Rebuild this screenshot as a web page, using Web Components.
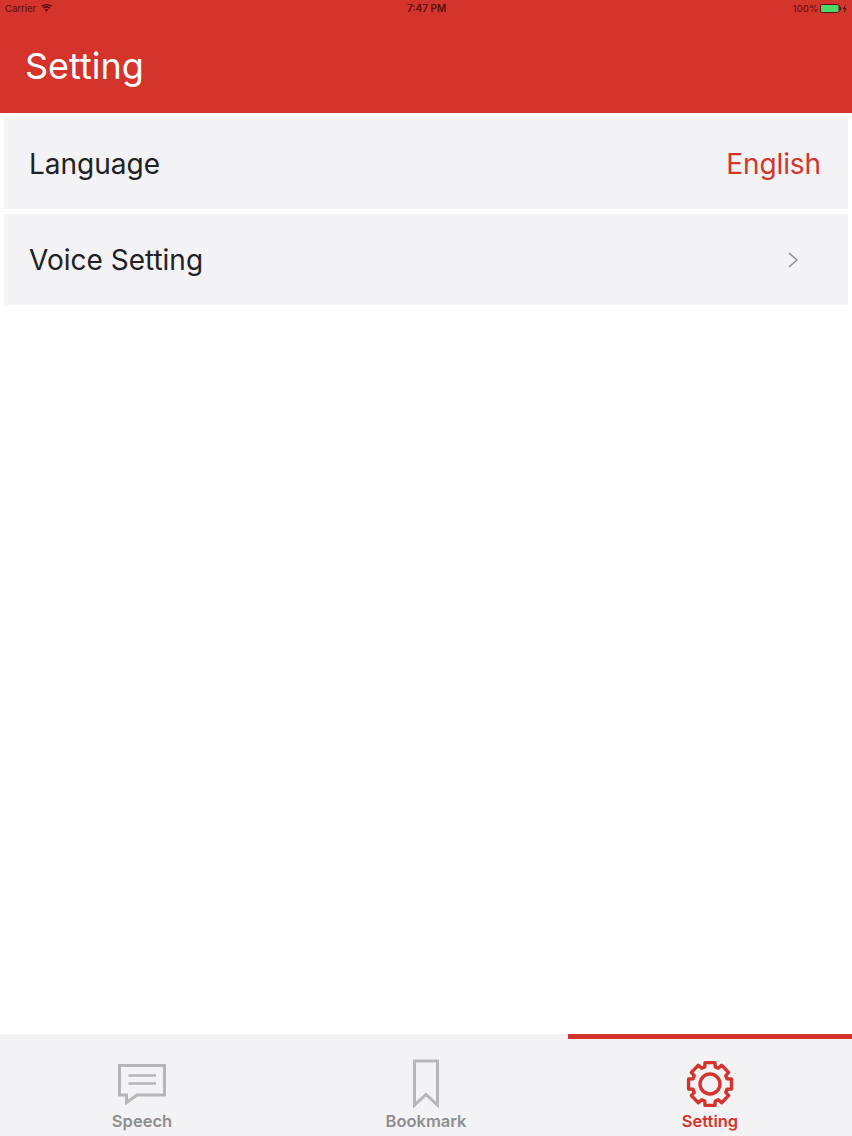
<!DOCTYPE html>
<html>
<head>
<meta charset="utf-8">
<title>Setting</title>
<style>
  html, body { margin: 0; height: 100%; background: #fff; }
  body { font-family: Inter, "Liberation Sans", sans-serif; }
</style>
</head>
<body>
<app-shell>
  <app-header slot="top" title="Setting"></app-header>
  <setting-row label="Language" value="English"></setting-row>
  <setting-row label="Voice Setting" chevron></setting-row>
  <tab-bar slot="bottom">
    <tab-item label="Speech" icon="speech"></tab-item>
    <tab-item label="Bookmark" icon="bookmark"></tab-item>
    <tab-item label="Setting" icon="gear" active></tab-item>
  </tab-bar>
</app-shell>

<script>
// Gear outline with 8 teeth, centred in a 48x48 box
function gearPath() {
  const teeth = 8, outer = 22, valley = 17.8, cx = 24, cy = 24;
  const halfTop = 0.23, halfBase = 0.3;
  const pts = [];
  for (let i = 0; i < teeth; i++) {
    const a = i * Math.PI * 2 / teeth - Math.PI / 2;
    pts.push([a - halfBase, valley], [a - halfTop, outer], [a + halfTop, outer], [a + halfBase, valley]);
  }
  const d = pts.map(([a, r], i) => {
    const x = (cx + r * Math.cos(a)).toFixed(2);
    const y = (cy + r * Math.sin(a)).toFixed(2);
    return (i ? 'L' : 'M') + x + ' ' + y;
  });
  return d.join(' ') + ' Z';
}

const ICONS = {
  speech: `<svg width="50" height="42" viewBox="0 0 50 42" fill="none" stroke="currentColor">
      <path d="M2.5 2.5 H47.5 V32 H20 L9.5 39.5 V32 H2.5 Z" stroke-width="3"/>
      <path d="M11.5 12.5 H39 M11.5 20.5 H39" stroke-width="2.6"/>
    </svg>`,
  bookmark: `<svg width="28" height="50" viewBox="0 0 28 50" fill="none" stroke="currentColor" stroke-width="3">
      <path d="M2.5 2 H25.5 V46 L14 35.5 L2.5 46 Z"/>
    </svg>`,
  gear: `<svg width="48" height="48" viewBox="0 0 48 48" fill="none" stroke="currentColor" stroke-width="3.4" stroke-linejoin="round">
      <path d="${gearPath()}"/>
      <circle cx="24" cy="24" r="10"/>
    </svg>`
};

class AppShell extends HTMLElement {
  constructor() {
    super();
    this.attachShadow({ mode: 'open' });
    this.shadowRoot.innerHTML = `
      <style>
        :host { display: flex; flex-direction: column; height: 100vh; min-height: 1136px; }
        main { flex: 1; display: flex; flex-direction: column; gap: 5px; padding: 5px 4px 0; }
      </style>
      <slot name="top"></slot>
      <main><slot></slot></main>
      <slot name="bottom"></slot>
    `;
  }
}

class AppHeader extends HTMLElement {
  constructor() {
    super();
    this.attachShadow({ mode: 'open' });
    this.shadowRoot.innerHTML = `
      <style>
        :host { display: block; height: 113px; background: #d4342c; color: #fff; }
        .status {
          display: grid; grid-template-columns: 1fr auto 1fr; align-items: center;
          height: 16px; padding: 0 4px 0 5px;
          font-size: 9.5px; color: #5a0f0c;
        }
        .left { display: flex; align-items: center; gap: 5px; }
        .time { font-weight: 600; font-size: 10px; }
        .right { display: flex; align-items: center; justify-content: flex-end; gap: 2px; }
        h1 {
          margin: 0; padding: 20px 0 0 25px;
          font-size: 36px; font-weight: 400; line-height: 60px;
        }
      </style>
      <div class="status">
        <div class="left">
          <span>Carrier</span>
          <svg width="11" height="8" viewBox="0 0 11 8" fill="#5a0f0c">
            <path d="M5.5 8 L3.6 5.7 Q5.5 4.4 7.4 5.7 Z M2.8 4.8 L1.6 3.4 Q5.5 .6 9.4 3.4 L8.2 4.8 Q5.5 2.9 2.8 4.8 Z M1 2.7 L0 1.6 Q5.5 -1.6 11 1.6 L10 2.7 Q5.5 -.3 1 2.7 Z"/>
          </svg>
        </div>
        <span class="time">7:47 PM</span>
        <div class="right">
          <span>100%</span>
          <svg width="28" height="9" viewBox="0 0 28 9">
            <rect x=".5" y=".5" width="18.5" height="8" rx="1.5" fill="#4cd964" stroke="#5a0f0c"/>
            <rect x="19.5" y="3" width="1.5" height="3" fill="#5a0f0c"/>
            <path d="M25.5 0 L23 5 H24.5 L24 9 L26.5 4 H25 Z" fill="#5a0f0c"/>
          </svg>
        </div>
      </div>
      <h1></h1>
    `;
  }
  connectedCallback() {
    this.shadowRoot.querySelector('h1').textContent = this.getAttribute('title');
  }
}

class SettingRow extends HTMLElement {
  constructor() {
    super();
    this.attachShadow({ mode: 'open' });
    this.shadowRoot.innerHTML = `
      <style>
        :host {
          display: flex; align-items: center; justify-content: space-between;
          height: 91px; padding: 0 27px 0 25px; background: #f3f3f5;
          font-size: 28px; color: #212125;
        }
        .value { color: #d4342c; letter-spacing: -.1px; }
        svg { margin-right: 23px; }
      </style>
      <span class="label"></span>
      <span class="end"></span>
    `;
  }
  connectedCallback() {
    const root = this.shadowRoot;
    root.querySelector('.label').textContent = this.getAttribute('label');
    const end = root.querySelector('.end');
    if (this.hasAttribute('chevron')) {
      end.innerHTML = `<svg width="10" height="16" viewBox="0 0 10 16" fill="none" stroke="#8e8e92" stroke-width="1.5" style="display:block"><path d="M1 1 L9 8 L1 15"/></svg>`;
    } else {
      end.innerHTML = `<span class="value"></span>`;
      end.firstChild.textContent = this.getAttribute('value');
    }
  }
}

class TabBar extends HTMLElement {
  constructor() {
    super();
    this.attachShadow({ mode: 'open' });
    this.shadowRoot.innerHTML = `
      <style>
        :host {
          display: grid; grid-template-columns: repeat(3, 1fr);
          height: 102px; background: #f3f2f4;
        }
      </style>
      <slot></slot>
    `;
  }
}

class TabItem extends HTMLElement {
  constructor() {
    super();
    this.attachShadow({ mode: 'open' });
    this.shadowRoot.innerHTML = `
      <style>
        :host {
          display: flex; flex-direction: column; align-items: center;
          border-top: 5px solid transparent; color: #b6b6b8;
        }
        :host([active]) { border-top-color: #d4342c; color: #d4342c; }
        .icon { height: 50px; margin-top: 20px; display: flex; align-items: center; justify-content: center; }
        .text { margin-top: 2px; font-size: 16.5px; line-height: 20px; font-weight: 600; color: #8e8e90; }
        :host([active]) .text { color: #d4342c; }
      </style>
      <div class="icon"></div>
      <div class="text"></div>
    `;
  }
  connectedCallback() {
    const root = this.shadowRoot;
    root.querySelector('.icon').innerHTML = ICONS[this.getAttribute('icon')];
    root.querySelector('.text').textContent = this.getAttribute('label');
  }
}

customElements.define('app-shell', AppShell);
customElements.define('app-header', AppHeader);
customElements.define('setting-row', SettingRow);
customElements.define('tab-bar', TabBar);
customElements.define('tab-item', TabItem);
</script>
</body>
</html>
